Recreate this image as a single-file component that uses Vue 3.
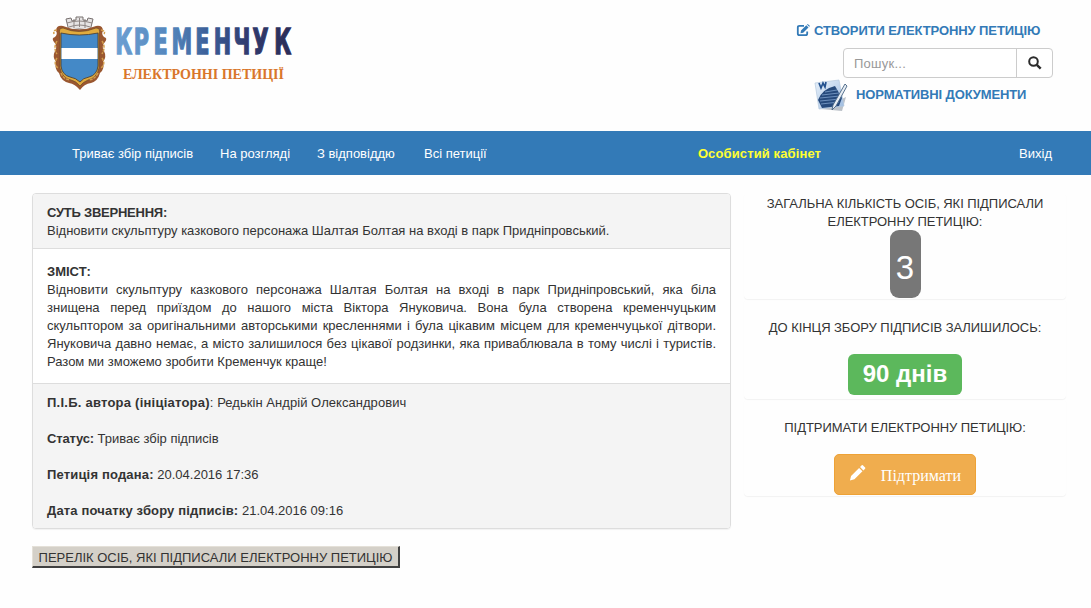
<script setup>
const links = [
  { text: 'Триває збір підписів', cls: 'n1' },
  { text: 'На розгляді', cls: 'n2' },
  { text: 'З відповіддю', cls: 'n3' },
  { text: 'Всі петиції', cls: 'n4' },
]
const details = [
  { cls: 'd1', label: 'П.І.Б. автора (ініціатора)', sep: ': ', value: 'Редькін Андрій Олександрович' },
  { cls: 'd2', label: 'Статус:', sep: ' ', value: 'Триває збір підписів' },
  { cls: 'd3', label: 'Петиція подана:', sep: ' ', value: '20.04.2016 17:36' },
  { cls: 'd4', label: 'Дата початку збору підписів:', sep: ' ', value: '21.04.2016 09:16' },
]
const content = [
  'Відновити скульптуру казкового персонажа Шалтая Болтая на вході в парк Придніпровський, яка біла',
  'знищена перед приїздом до нашого міста Віктора Януковича. Вона була створена кременчуцьким',
  'скульптором за оригінальними авторськими кресленнями і була цікавим місцем для кременчуцької дітвори.',
  'Януковича давно немає, а місто залишилося без цікавої родзинки, яка приваблювала в тому числі і туристів.',
  'Разом ми зможемо зробити Кременчук краще!',
]
</script>

<template>
  <div class="page">
    <header class="top">
      <svg class="logo" width="260" height="84" viewBox="0 0 260 84">
        <defs>
          <linearGradient id="brand" gradientUnits="userSpaceOnUse" x1="106" x2="373" y1="0" y2="0">
            <stop offset="0" stop-color="#6c9fd2" />
            <stop offset=".3" stop-color="#5587bd" />
            <stop offset=".55" stop-color="#395a94" />
            <stop offset=".75" stop-color="#303b6e" />
            <stop offset="1" stop-color="#2b2c58" />
          </linearGradient>
        </defs>
        <!-- mural crown -->
        <path d="M20 7l5-1 1 3 4-1v-3h7v3l4 1 1-3 5 1-3 12q-11-4-21 0z" fill="#e6e4e4" stroke="#77706f" stroke-width="1" />
        <path d="M21 11q12-4 25 0M23 15q11-4 21 0M28 7v9M33.500 6v9M39 7v9" fill="none" stroke="#8d8583" stroke-width="1" />
        <!-- ornate frame -->
        <path d="M17 14q16 7 33 0 7-1 7 5-2 3 1 6 4 1 1 5-4 4-1 9 3 6-1 11 2 7-3 11-2 8-9 10-7 1-11 7-5-6-11-7-8-2-10-10-5-4-3-11-4-5-1-11 3-5-1-9-3-4 1-5 3-3 1-6 0-6 7-5z" fill="#9a5730" />
        <path d="M17 16q16 7 33 0 5 0 3 6v34q-2 10-11 12-5 2-8 6-4-5-9-6-9-2-11-12V22q-2-6 3-6z" fill="#e0ab3e" stroke="#6d4a28" stroke-width=".7" />
        <path d="M11 18q-4 0-3 4M11 29q-4 7 0 13M11 46q-4 6 1 10M55 18q5 1 3 4M56 29q4 6 0 13M56 46q4 6-1 10M15 61q2 6 9 7M52 61q-3 6-9 7" fill="none" stroke="#d29c4b" stroke-width="1.500" stroke-dasharray="3 1" />
        <path d="M15 21q18 4 37 0v33q-1 9-9 11-6 1-9 5-4-4-10-5-8-2-9-11z" fill="#4489c7" stroke="#47382b" stroke-width=".8" />
        <path d="M15.500 36h36v11h-36z" fill="#fff" />
        <text class="brand" transform="scale(.66 1)" x="105 133 163 190 226 254 284 313 346" y="42.500" fill="url(#brand)" stroke="url(#brand)">КРЕМЕНЧУК</text>
        <text class="brand-sub" x="77" y="67" textLength="161" lengthAdjust="spacingAndGlyphs">ЕЛЕКТРОННІ ПЕТИЦІЇ</text>
      </svg>

      <div class="tools">
        <a class="create">
          <svg width="14" height="13" viewBox="0 0 14 13">
            <path d="M8 1.800H3.500Q1.800 1.800 1.800 3.500v6Q1.800 11.200 3.500 11.200h6Q11.200 11.200 11.200 9.500V7.500" fill="none" stroke="#337ab7" stroke-width="1.800" />
            <path d="M5 6.500L10.300 1.200l2.200 2.200L7.200 8.700 4.500 9.200zM11 .500l.7-.5L14 2l-.8.700z" fill="#337ab7" />
          </svg>
          <span class="t-create">СТВОРИТИ ЕЛЕКТРОННУ ПЕТИЦІЮ</span>
        </a>
        <div class="search">
          <span class="field">Пошук...</span>
          <span class="go">
            <svg width="14" height="14" viewBox="0 0 14 14">
              <circle cx="5.500" cy="5.500" r="4.300" fill="none" stroke="#2b2b2b" stroke-width="2" />
              <path d="M8.800 8.800l3.900 3.900" stroke="#2b2b2b" stroke-width="2.400" />
            </svg>
          </span>
        </div>
        <a class="docs">
          <svg width="34" height="34" viewBox="0 0 34 34">
            <defs>
              <linearGradient id="sheet" x1="0" y1="0" x2="1" y2="1">
                <stop offset="0" stop-color="#e9f2fb" /><stop offset="1" stop-color="#9dbbe0" />
              </linearGradient>
            </defs>
            <path d="M7 31l21 2 4-14z" fill="#8d97a3" opacity=".6" />
            <path d="M1 5L25 2l5 26-25 3z" fill="url(#sheet)" stroke="#b4c8de" stroke-width=".7" />
            <path d="M4 22Q8 11 21 8l7 12-3 8-17 2z" fill="#264a7c" />
            <path d="M11 14l12-2M8 17l17-2M6 20l20-2M6 23l20-2M7 26l18-2" stroke="#7fa2cd" stroke-width=".8" />
            <path d="M5 5l2 5 2-5 2 4 1-5" fill="none" stroke="#24528f" stroke-width="1.700" />
            <path d="M31 6l2 2-11 20-4 4 1-5z" fill="#e8eef4" stroke="#456382" stroke-width=".9" />
          </svg>
          <span class="t-docs">НОРМАТИВНІ ДОКУМЕНТИ</span>
        </a>
      </div>
    </header>

    <nav class="bar">
      <a v-for="l in links" :key="l.text" :class="l.cls">{{ l.text }}</a>
      <a class="cabinet">Особистий кабінет</a>
      <a class="exit">Вихід</a>
    </nav>

    <main class="main">
      <section class="left">
        <div class="panel">
          <div class="head">
            <b class="t-b">СУТЬ ЗВЕРНЕННЯ:</b>
            <p>Відновити скульптуру казкового персонажа Шалтая Болтая на вході в парк Придніпровський.</p>
          </div>
          <div class="body">
            <b>ЗМІСТ:</b>
            <p v-for="line in content" :key="line" class="line">{{ line }}</p>
          </div>
          <div class="foot">
            <p v-for="d in details" :key="d.label" :class="d.cls"><b>{{ d.label }}</b>{{ d.sep }}{{ d.value }}</p>
          </div>
        </div>
        <button class="list">ПЕРЕЛІК ОСІБ, ЯКІ ПІДПИСАЛИ ЕЛЕКТРОННУ ПЕТИЦІЮ</button>
      </section>

      <aside class="side">
        <div class="card c1">
          <p>ЗАГАЛЬНА КІЛЬКІСТЬ ОСІБ, ЯКІ ПІДПИСАЛИ<br />ЕЛЕКТРОННУ ПЕТИЦІЮ:</p>
          <span class="count">3</span>
        </div>
        <div class="card c2">
          <p>ДО КІНЦЯ ЗБОРУ ПІДПИСІВ ЗАЛИШИЛОСЬ:</p>
          <span class="days">90 днів</span>
        </div>
        <div class="card c3">
          <p>ПІДТРИМАТИ ЕЛЕКТРОННУ ПЕТИЦІЮ:</p>
          <button class="support">
            <svg width="18" height="18" viewBox="0 0 18 18">
              <path d="M1 17l1.200-4.800L10.800 3.600l3.600 3.600L5.800 15.800zM11.800 2.600L13.600.8q.6-.6 1.200 0l2.400 2.400q.6.600 0 1.200L15.400 6.200z" fill="#fff" />
            </svg>
            <span>Підтримати</span>
          </button>
        </div>
      </aside>
    </main>
  </div>
</template>

<style>
body {
  margin: 0;
  background: #fefefe;
}
</style>

<style scoped>
* {
  box-sizing: border-box;
}
.page {
  width: 1091px;
  height: 608px;
  overflow: hidden;
  background: #fefefe;
  color: #333;
  font: 13px/18px "Liberation Sans", Arial, sans-serif;
}
p {
  margin: 0;
  white-space: nowrap;
}
.top {
  height: 131px;
  display: flex;
  justify-content: space-between;
  padding: 12px 38px 0 46px;
}
.logo {
  overflow: visible;
}
.brand {
  font: bold 35px "DejaVu Sans Condensed", "DejaVu Sans", sans-serif;
  stroke-width: 1.3px;
}
.brand-sub {
  font: bold 14px "Liberation Serif", serif;
  fill: #d9762b;
}
.tools {
  width: 257px;
  color: #337ab7;
  font-weight: bold;
}
.create {
  display: flex;
  align-items: center;
  height: 36px;
  gap: 4px;
  white-space: nowrap;
}
.t-create {
  padding-top: 1px;
  letter-spacing: -0.09px;
}
.search {
  display: flex;
  width: 210px;
  height: 30px;
  margin-left: 47px;
  border: 1px solid #ccc;
  border-radius: 4px;
  background: #fff;
  font-weight: normal;
}
.field {
  flex: 1;
  padding: 6px 10px;
  color: #999;
  letter-spacing: 0.25px;
}
.go {
  width: 36px;
  border-left: 1px solid #ccc;
  display: flex;
  align-items: center;
  justify-content: center;
}
.docs {
  display: flex;
  padding-left: 18px;
  gap: 8px;
  white-space: nowrap;
}
.t-docs {
  padding-top: 8px;
  letter-spacing: -0.12px;
}
.bar {
  height: 44px;
  padding: 1px 39px 0 72px;
  display: flex;
  align-items: center;
  background: #337ab7;
  color: #fff;
  white-space: nowrap;
}
.n1 { width: 148px; }
.n2 { width: 97px; }
.n3 { width: 107px; }
.n4 { margin-right: auto; }
.cabinet {
  margin-right: 198px;
  color: #ff3;
  font-weight: bold;
  letter-spacing: 0.12px;
}
.main {
  display: flex;
  gap: 13px;
  padding: 18px 0 0 32px;
}
.left {
  width: 699px;
}
.panel {
  border: 1px solid #ddd;
  border-radius: 4px;
  overflow: hidden;
  box-shadow: 0 1px 1px rgba(0, 0, 0, 0.05);
}
.head,
.foot {
  background: #f4f4f4;
}
.head {
  height: 55px;
  padding: 10px 14px;
  border-bottom: 1px solid #ddd;
}
.t-b {
  letter-spacing: -0.24px;
}
.body {
  height: 134px;
  padding: 14px 14px 0;
  background: #fff;
}
.line {
  text-align: justify;
  text-align-last: justify;
}
.line:last-child {
  text-align-last: left;
}
.foot {
  height: 145px;
  padding: 10px 14px;
  border-top: 1px solid #ddd;
  display: flex;
  flex-direction: column;
  gap: 18px;
}
.d1 { letter-spacing: 0.05px; }
.d1 b { letter-spacing: 0.24px; }
.d2 b { letter-spacing: -0.18px; }
.d3 b { letter-spacing: 0.17px; }
.d4 b { letter-spacing: 0.15px; }
.list {
  display: block;
  width: 368px;
  height: 22px;
  margin-top: 17px;
  padding: 2px 0 0;
  border: solid;
  border-width: 1px 2px 2px 1px;
  border-color: #e4e0d8 #404040 #404040 #e4e0d8;
  background: #d4d0c8;
  color: #333;
  font: 13px/17px "Liberation Sans", Arial, sans-serif;
  white-space: nowrap;
}
.side {
  width: 322px;
}
.card {
  display: flex;
  flex-direction: column;
  align-items: center;
  text-align: center;
  border-radius: 4px;
  box-shadow: 0 1px 1px rgba(0, 0, 0, 0.05);
}
.card p {
  padding-top: 1px;
  letter-spacing: -0.05px;
}
.c1 { height: 106px; }
.c2 { height: 100px; padding-top: 19px; }
.c3 { height: 97px; padding-top: 19px; }
.c1 p {
  height: 37px;
  padding-top: 2px;
}
.count {
  width: 31px;
  height: 68px;
  border-radius: 9px;
  background: #777;
  color: #fff;
  font-size: 33px;
  line-height: 76px;
}
.days {
  width: 114px;
  height: 41px;
  margin-top: 17px;
  border-radius: 6px;
  background: #5cb85c;
  color: #fff;
  font-size: 24px;
  font-weight: bold;
  line-height: 40px;
}
.support {
  display: flex;
  width: 142px;
  height: 41px;
  margin-top: 17px;
  padding: 9px 14px 0;
  gap: 15px;
  border: 1px solid #eea236;
  border-radius: 5px;
  background: #f0ad4e;
  color: #fff;
  font: 16px/24px "Liberation Serif", serif;
}
</style>
